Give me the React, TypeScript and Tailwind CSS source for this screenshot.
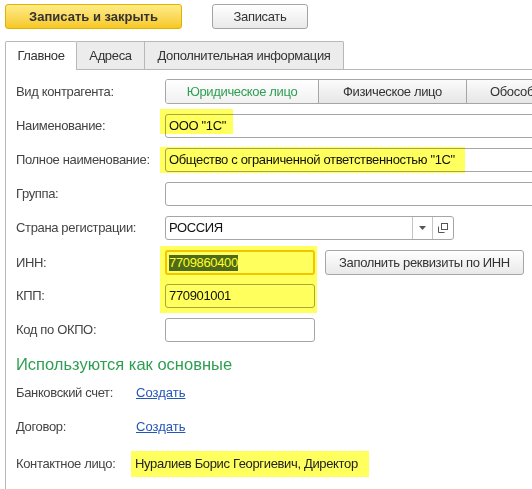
import React from "react";

const font = { fontFamily: '"Liberation Sans", Arial, sans-serif' };

const Label = ({ children }: { children: React.ReactNode }) => (
  <div className="w-[149px] shrink-0 text-[13px] text-[#444]">{children}</div>
);

const Field = ({ value, width }: { value?: string; width: string }) => (
  <div
    className={`${width} h-[24px] shrink-0 rounded-[3px] border border-[#a6a6a6] bg-white pl-[3px] flex items-center text-[13px] text-[#111] overflow-hidden whitespace-nowrap`}
  >
    {value}
  </div>
);

const App = () => {
  return (
    <div style={font} className="w-[532px] h-[489px] overflow-hidden bg-white relative tracking-[-0.35px]">
      {/* toolbar */}
      <div className="flex pl-[5px] pt-[4px] gap-[30px]">
        <button className="w-[177px] h-[25px] rounded-[3px] border border-[#e2b200] bg-gradient-to-b from-[#ffec85] to-[#f6c81c] text-[13px] font-bold text-[#333] tracking-normal">
          Записать и закрыть
        </button>
        <button className="w-[96px] h-[25px] rounded-[3px] border border-[#a4a4a4] bg-gradient-to-b from-white to-[#e9e9e9] text-[13px] text-[#333]">
          Записать
        </button>
      </div>

      {/* tabs */}
      <div className="mt-[12px] ml-[5px] flex h-[29px] border-b border-[#b8b8b8]">
        <div className="w-[72px] h-[29px] -mb-px border border-b-0 border-[#b8b8b8] bg-white rounded-t-[2px] flex items-center justify-center text-[13px] text-[#333]">
          Главное
        </div>
        <div className="w-[68px] h-[28px] border-t border-r border-[#b8b8b8] bg-[#ececec] flex items-center justify-center text-[13px] text-[#333]">
          Адреса
        </div>
        <div className="w-[199px] h-[28px] border-t border-r border-[#b8b8b8] bg-[#ececec] rounded-tr-[2px] flex items-center justify-center text-[13px] text-[#333]">
          Дополнительная информация
        </div>
      </div>

      {/* content */}
      <div className="ml-[5px] border-l border-[#b8b8b8] h-[420px] pl-[10px] pt-[9px]">
        <div className="flex items-center h-[25px]">
          <Label>Вид контрагента:</Label>
          <div className="flex h-[25px] shrink-0 rounded-l-[3px] border border-[#a6a6a6] overflow-hidden text-[13px] whitespace-nowrap">
            <div className="w-[152px] flex items-center justify-center bg-gradient-to-b from-white to-[#f1f1f1] text-[#2e9e52]">
              Юридическое лицо
            </div>
            <div className="w-[148px] flex items-center justify-center border-l border-[#a6a6a6] bg-gradient-to-b from-[#fbfbfb] to-[#e6e6e6] text-[#333]">
              Физическое лицо
            </div>
            <div className="w-[200px] flex items-center pl-[23px] border-l border-[#a6a6a6] bg-gradient-to-b from-[#fbfbfb] to-[#e6e6e6] text-[#333]">
              Обособленное
            </div>
          </div>
        </div>

        <div className="flex items-center mt-[10px]">
          <Label>Наименование:</Label>
          <div className="relative">
            <Field value={'ООО "1С"'} width="w-[400px]" />
            <div className="absolute left-[-5px] top-[-5px] w-[73px] h-[25px] bg-[#ffff5e] mix-blend-multiply" />
          </div>
        </div>

        <div className="flex items-center mt-[10px]">
          <Label>Полное наименование:</Label>
          <div className="relative">
            <Field value={'Общество с ограниченной ответственностью "1С"'} width="w-[400px]" />
            <div className="absolute left-[-5px] top-[-1px] w-[305px] h-[26px] bg-[#ffff5e] mix-blend-multiply" />
          </div>
        </div>

        <div className="flex items-center mt-[10px]">
          <Label>Группа:</Label>
          <Field width="w-[400px]" />
        </div>

        <div className="flex items-center mt-[10px]">
          <Label>Страна регистрации:</Label>
          <div className="w-[289px] h-[24px] shrink-0 rounded-[3px] border border-[#a6a6a6] bg-white flex text-[13px] text-[#111]">
            <div className="flex-1 pl-[3px] flex items-center">РОССИЯ</div>
            <div className="w-[20px] border-l border-[#c4c4c4] flex items-center justify-center">
              <svg width="7" height="4" viewBox="0 0 7 4">
                <path d="M0 0h7L3.5 4z" fill="#555" />
              </svg>
            </div>
            <div className="w-[21px] border-l border-[#c4c4c4] flex items-center justify-center">
              <svg width="10" height="10" viewBox="0 0 10 10" fill="none" stroke="#555" strokeWidth="1">
                <rect x="3.5" y="0.5" width="6" height="6" />
                <path d="M0.5 3.5v6h6" />
              </svg>
            </div>
          </div>
        </div>

        <div className="flex items-center mt-[10px]">
          <Label>ИНН:</Label>
          <div className="relative">
            <div className="w-[150px] h-[25px] rounded-[3px] border-2 border-[#f5c400] bg-white pl-[2px] flex items-center text-[13px]">
              <span className="bg-[#4e6a45] text-[#ffff66] leading-[16px]">7709860400</span>
            </div>
            <div className="absolute left-[-5px] top-[-4px] w-[157px] h-[67px] bg-[#ffff5e] mix-blend-multiply" />
          </div>
          <button className="ml-[10px] w-[199px] h-[25px] rounded-[3px] border border-[#a6a6a6] bg-gradient-to-b from-white to-[#e9e9e9] text-[13px] text-[#333]">
            Заполнить реквизиты по ИНН
          </button>
        </div>

        <div className="flex items-center mt-[9px]">
          <Label>КПП:</Label>
          <Field value="770901001" width="w-[150px]" />
        </div>

        <div className="flex items-center mt-[10px]">
          <Label>Код по ОКПО:</Label>
          <Field width="w-[150px]" />
        </div>

        <div className="mt-[12px] h-[20px] flex items-center text-[16.5px] text-[#2e9e52] tracking-normal">
          Используются как основные
        </div>

        <div className="flex items-center mt-[7px] h-[24px]">
          <div className="w-[120px] text-[13px] text-[#444]">Банковский счет:</div>
          <a className="text-[13px] text-[#2356b8] underline tracking-normal">Создать</a>
        </div>

        <div className="flex items-center mt-[10px] h-[24px]">
          <div className="w-[120px] text-[13px] text-[#444]">Договор:</div>
          <a className="text-[13px] text-[#2356b8] underline tracking-normal">Создать</a>
        </div>

        <div className="flex items-center mt-[12px] h-[26px]">
          <div className="w-[115px] text-[13px] text-[#444]">Контактное лицо:</div>
          <div className="h-[26px] w-[238px] bg-[#ffff5e] pl-[4px] flex items-center text-[13px] text-[#222] whitespace-nowrap">
            Нуралиев Борис Георгиевич, Директор
          </div>
        </div>
      </div>
    </div>
  );
};

export default App;
